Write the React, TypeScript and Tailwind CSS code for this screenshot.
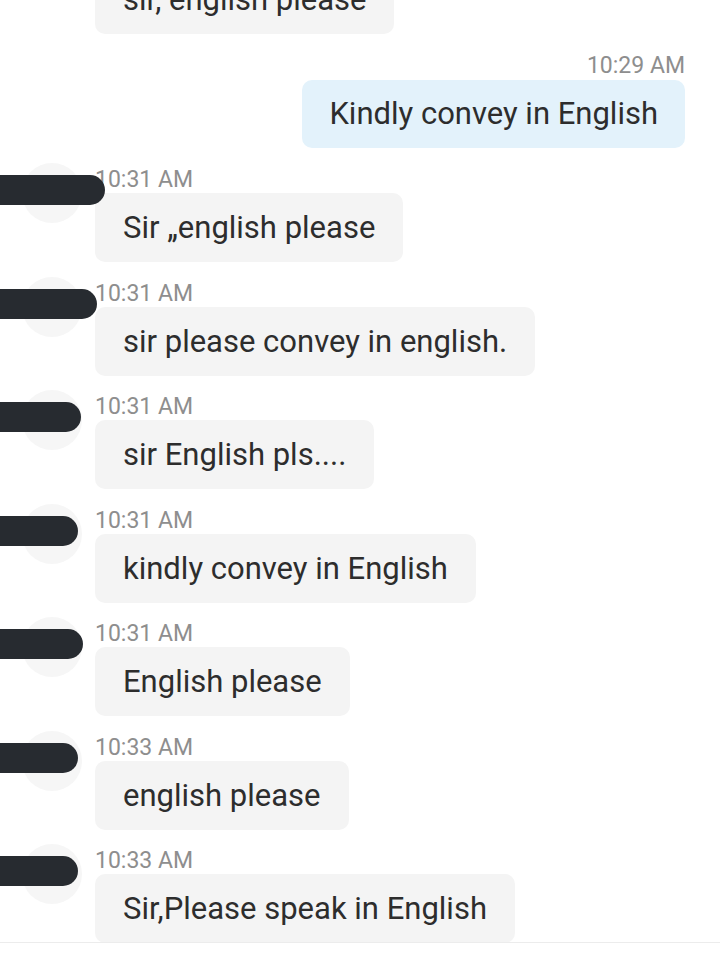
import React from "react";

type Msg = { time: string; text: string; bar: number };

// incoming messages; bar = width of the black redaction over the avatar
const INCOMING: Msg[] = [
  { time: "10:31 AM", text: "Sir \u201eenglish please", bar: 105 },
  { time: "10:31 AM", text: "sir please convey in english.", bar: 97 },
  { time: "10:31 AM", text: "sir English pls....", bar: 81 },
  { time: "10:31 AM", text: "kindly convey in English", bar: 78 },
  { time: "10:31 AM", text: "English please", bar: 83 },
  { time: "10:33 AM", text: "english please", bar: 78 },
  { time: "10:33 AM", text: "Sir,Please speak in English", bar: 78 },
];

function Incoming({ msg }: { msg: Msg }) {
  return (
    <div className="flex items-start">
      <div className="relative w-[95px] shrink-0">
        <div className="ml-[22px] mt-[-3px] h-[60px] w-[60px] rounded-full bg-[#f6f6f6]" />
        <div
          className="absolute left-0 top-[9px] h-[30px] rounded-r-full bg-[#272b30]"
          style={{ width: msg.bar }}
        />
      </div>
      <div className="flex flex-col items-start">
        <div className="h-[24px] text-[23px] leading-[28px] text-[#8e8e8e]">{msg.time}</div>
        <div className="mt-[3px] h-[69px] rounded-[10px] bg-[#f4f4f4] px-[28px] text-[31px] leading-[69px] text-[#2d2d2d]">
          {msg.text}
        </div>
      </div>
    </div>
  );
}

export default function App() {
  return (
    <div
      className="flex h-[957px] w-[720px] flex-col overflow-hidden bg-white"
      style={{ fontFamily: "Roboto, 'Noto Sans', sans-serif" }}
    >
      {/* cut-off bubble at the top */}
      <div className="ml-[95px] mt-[-35px] h-[69px] self-start rounded-[10px] bg-[#f4f4f4] px-[28px] text-[31px] leading-[69px] text-[#2d2d2d]">
        sir, english please
      </div>

      {/* outgoing */}
      <div className="mr-[35px] mt-[18px] flex flex-col items-end">
        <div className="h-[24px] text-[23px] leading-[28px] text-[#8e8e8e]">10:29 AM</div>
        <div className="mt-[4px] h-[68px] rounded-[10px] bg-[#e3f2fb] px-[27px] text-[31px] leading-[68px] text-[#2d2d2d]">
          Kindly convey in English
        </div>
      </div>

      <div className="mt-[18px] flex flex-col gap-[17.5px]">
        {INCOMING.map((m, i) => (
          <Incoming key={i} msg={m} />
        ))}
      </div>

      <div className="mt-[-1px] flex-1 border-t border-[#ececec] bg-white" />
    </div>
  );
}
